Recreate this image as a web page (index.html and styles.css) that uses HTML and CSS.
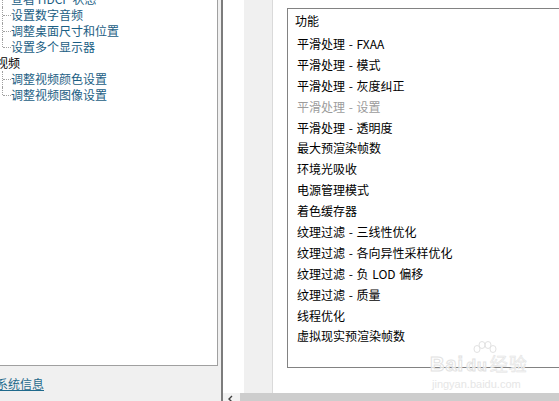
FILE: index.html
```html
<!DOCTYPE html>
<html lang="zh-CN">
<head>
<meta charset="utf-8">
<title>NVIDIA 控制面板</title>
<link rel="stylesheet" href="styles.css">
</head>
<body>
<div class="page">
  <div class="left">
    <div class="tree">
      <div class="node"><span class="conn"></span><span class="label">查看 HDCP 状态</span></div>
      <div class="node"><span class="conn"></span><span class="label">设置数字音频</span></div>
      <div class="node"><span class="conn"></span><span class="label">调整桌面尺寸和位置</span></div>
      <div class="node last"><span class="conn"></span><span class="label">设置多个显示器</span></div>
      <div class="node root"><span class="label">视频</span></div>
      <div class="node"><span class="conn"></span><span class="label">调整视频颜色设置</span></div>
      <div class="node last"><span class="conn"></span><span class="label">调整视频图像设置</span></div>
    </div>
    <div class="linkbar"><a class="link">系统信息</a></div>
  </div>
  <div class="splitter"></div>
  <div class="right">
    <div class="right-main">
      <div class="col-white"></div>
      <div class="col-gray"></div>
      <div class="content">
        <div class="listbox">
          <div class="lhead">功能</div>
          <div class="items">
            <div class="item">平滑处理 - FXAA</div>
            <div class="item">平滑处理 - 模式</div>
            <div class="item">平滑处理 - 灰度纠正</div>
            <div class="item disabled">平滑处理 - 设置</div>
            <div class="item">平滑处理 - 透明度</div>
            <div class="item">最大预渲染帧数</div>
            <div class="item">环境光吸收</div>
            <div class="item">电源管理模式</div>
            <div class="item">着色缓存器</div>
            <div class="item">纹理过滤 - 三线性优化</div>
            <div class="item">纹理过滤 - 各向异性采样优化</div>
            <div class="item">纹理过滤 - 负 LOD 偏移</div>
            <div class="item">纹理过滤 - 质量</div>
            <div class="item">线程优化</div>
            <div class="item">虚拟现实预渲染帧数</div>
          </div>
        </div>
      </div>
    </div>
    <div class="hscroll">
      <span class="arrow"><svg width="17" height="8" viewBox="0 0 17 8"><path d="M9 3 L6 6 L9 9" fill="none" stroke="#404040" stroke-width="1.4"/></svg></span>
      <span class="thumb"></span>
    </div>
  </div>
  <div class="watermark">
    <svg class="paw" width="30" height="16" viewBox="0 0 30 16">
      <ellipse cx="9" cy="9" rx="3" ry="3.5" fill="none" stroke="#e2e2e2"/>
      <ellipse cx="14" cy="5" rx="3" ry="3.5" fill="none" stroke="#e2e2e2"/>
      <ellipse cx="20" cy="5" rx="3" ry="3.5" fill="none" stroke="#e2e2e2"/>
      <ellipse cx="25" cy="9" rx="3" ry="3.5" fill="none" stroke="#e2e2e2"/>
    </svg>
    <div class="wm-main">Bai<span class="wm-du">du</span><span class="wm-cn">经验</span></div>
    <div class="wm-url">jingyan.baidu.com</div>
  </div>
</div>
</body>
</html>
```

FILE: styles.css
```css
html, body {
  margin: 0;
  padding: 0;
}
body {
  width: 559px;
  height: 401px;
  overflow: hidden;
  background: #f0f0f0;
  font-family: "Noto Sans CJK SC", "Noto Sans", sans-serif;
  font-size: 12px;
}
.page {
  position: relative;
  display: flex;
  width: 559px;
  height: 401px;
  overflow: hidden;
}
.left {
  width: 221px;
  flex: none;
  display: flex;
  flex-direction: column;
  background: #f0f0f0;
}
.tree {
  width: 217px;
  height: 366px;
  background: #ffffff;
  border-right: 1px solid #a0a0a0;
  border-bottom: 1px solid #a0a0a0;
  overflow: hidden;
}
.node {
  display: flex;
  align-items: center;
  height: 16px;
  line-height: 16px;
  color: #1b5e84;
  white-space: nowrap;
}
.node:first-child {
  margin-top: -9px;
}
.node.root {
  color: #000;
}
.node.root .label {
  margin-left: -4px;
}
.conn {
  position: relative;
  flex: none;
  width: 9px;
  height: 16px;
  margin-left: 2px;
}
.conn::before {
  content: "";
  position: absolute;
  left: 0;
  top: 0;
  bottom: 0;
  border-left: 1px dotted #a0a0a0;
}
.node.last .conn::before {
  bottom: 8px;
}
.conn::after {
  content: "";
  position: absolute;
  left: 1px;
  top: 8px;
  width: 8px;
  border-top: 1px dotted #a0a0a0;
}
.linkbar {
  height: 34px;
  display: flex;
  align-items: center;
  padding-top: 1px;
}
.link {
  margin-left: -4px;
  color: #1f6a8c;
  text-decoration: underline;
  line-height: 16px;
}
.splitter {
  width: 2px;
  flex: none;
  background: #7c7c7c;
}
.right {
  flex: 1;
  display: flex;
  flex-direction: column;
  min-width: 0;
}
.right-main {
  height: 393px;
  display: flex;
}
.col-white {
  width: 21px;
  flex: none;
  background: #ffffff;
}
.col-gray {
  width: 28px;
  flex: none;
  background: #f0f0f0;
  border-right: 1px solid #dadada;
}
.content {
  flex: 1;
  background: #ffffff;
  padding: 8px 0 0 14px;
  overflow: hidden;
}
.listbox {
  width: 300px;
  height: 358px;
  border: 1px solid #828282;
  background: #ffffff;
  color: #000;
}
.lhead {
  padding: 1px 0 0 7px;
  line-height: 21px;
}
.items {
  margin-top: 3px;
}
.item {
  padding-left: 9px;
  line-height: 20.9px;
  height: 20.9px;
  white-space: nowrap;
  word-spacing: 1px;
}
.item.disabled {
  color: #9c9c9c;
}
.hscroll {
  height: 8px;
  display: flex;
}
.arrow {
  width: 17px;
  flex: none;
  background: #f2f2f2;
  overflow: hidden;
}
.arrow svg {
  display: block;
}
.thumb {
  flex: 1;
  background: #cdcdcd;
}
.watermark {
  position: absolute;
  left: 430px;
  top: 340px;
  width: 100px;
  pointer-events: none;
}
.paw {
  position: absolute;
  left: 38px;
  top: 0;
}
.wm-main {
  margin-top: 12px;
  font-family: "Liberation Sans", sans-serif;
  font-size: 20px;
  font-weight: bold;
  line-height: 22px;
  color: rgba(255, 255, 255, 0.7);
  -webkit-text-stroke: 1px #e2e2e2;
  letter-spacing: 1px;
  white-space: nowrap;
}
.wm-main .wm-du {
  font-size: 16px;
  margin: 0 2px;
}
.wm-main .wm-cn {
  font-family: "Noto Sans CJK SC", sans-serif;
  font-size: 18px;
  font-weight: normal;
  color: #f4f4f4;
  -webkit-text-stroke: 0.5px #e4e4e4;
}
.wm-url {
  font-family: "Liberation Sans", sans-serif;
  font-size: 11px;
  line-height: 14px;
  color: #e6e6e6;
  margin-left: 2px;
}
```
